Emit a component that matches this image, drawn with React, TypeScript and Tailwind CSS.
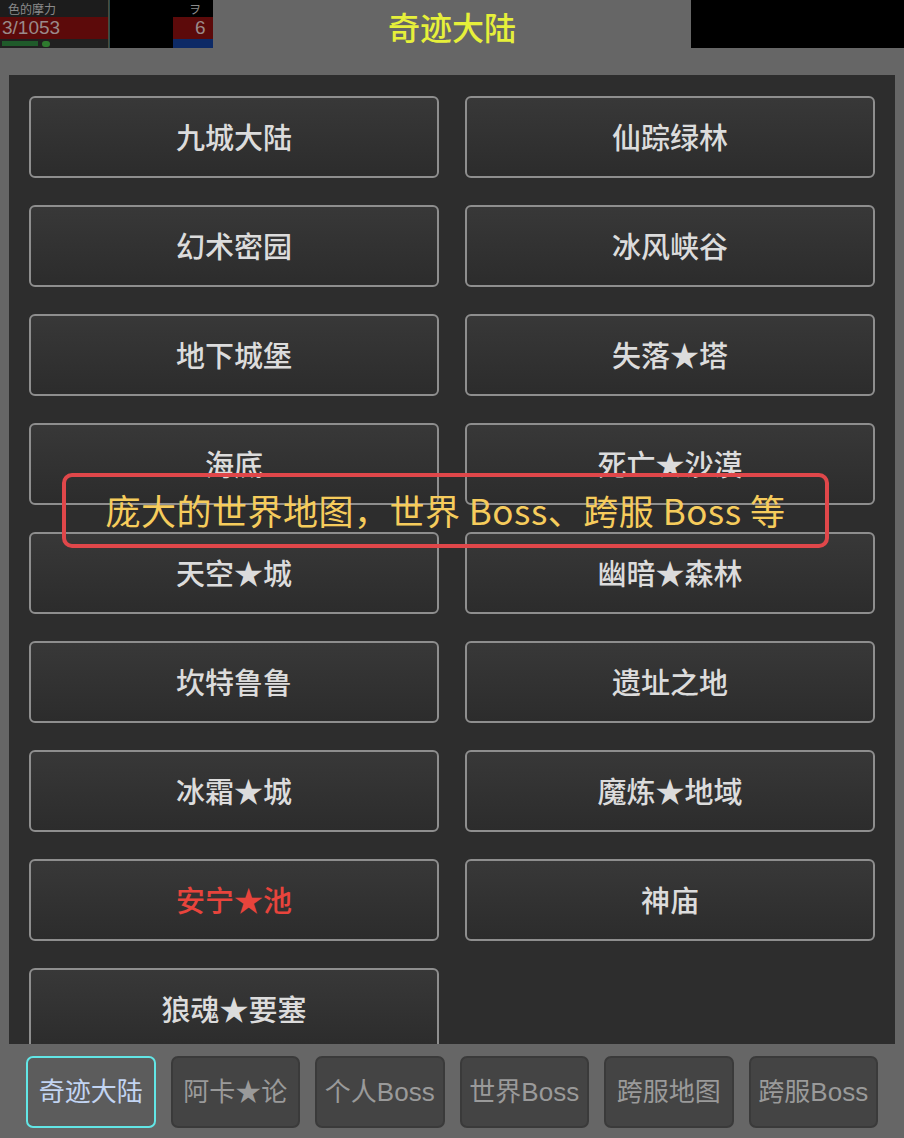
const maps = [
  { name: "九城大陆" },
  { name: "仙踪绿林" },
  { name: "幻术密园" },
  { name: "冰风峡谷" },
  { name: "地下城堡" },
  { name: "失落★塔" },
  { name: "海底" },
  { name: "死亡★沙漠" },
  { name: "天空★城" },
  { name: "幽暗★森林" },
  { name: "坎特鲁鲁" },
  { name: "遗址之地" },
  { name: "冰霜★城" },
  { name: "魔炼★地域" },
  { name: "安宁★池", danger: true },
  { name: "神庙" },
  { name: "狼魂★要塞" },
];

const tabs = ["奇迹大陆", "阿卡★论", "个人Boss", "世界Boss", "跨服地图", "跨服Boss"];

const cjk = "font-['Noto_Sans_CJK_SC',sans-serif]";

// the dimmed game HUD peeking out behind the dialog
const GameStrip = () => (
  <div className="flex w-[213px] h-[48px] bg-black">
    <div className="flex flex-col w-[108px] bg-[#1c1c1c]">
      <div className="h-[17px] flex items-center text-[12px] leading-[14px] text-[#8a8a8a] pl-[8px] whitespace-nowrap">
        色的摩力
      </div>
      <div className="h-[22px] flex items-center bg-[#5c0a0a] text-[19px] leading-[20px] text-[#9a8a8a] font-['Liberation_Sans',sans-serif] pl-[2px] whitespace-nowrap">
        3/1053
      </div>
      <div className="flex-1 flex items-center gap-[4px] pl-[2px] bg-[#202020]">
        <div className="w-[36px] h-[5px] bg-[#1f5a2a]" />
        <div className="w-[8px] h-[6px] rounded-full bg-[#2e7a2e]" />
      </div>
    </div>
    <div className="w-[1px] bg-[#4a4a3a]" />
    <div className="w-[1px] bg-[#2a4a4a]" />
    <div className="flex-1" />
    <div className="flex flex-col w-[40px] bg-black">
      <div className="h-[17px] flex items-center text-[12px] leading-[14px] text-[#8a8a8a] pl-[16px]">ヲ</div>
      <div className="h-[22px] flex items-center bg-[#5c0a0a] text-[19px] leading-[20px] text-[#9a8a8a] font-['Liberation_Sans',sans-serif] pl-[22px] whitespace-nowrap">
        6
      </div>
      <div className="flex-1 bg-[#0d2a66]" />
    </div>
  </div>
);

const MapButton = ({ name, danger }: { name: string; danger?: boolean }) => (
  <div
    className={`h-[82px] shrink-0 flex items-center justify-center rounded-[6px] border-2 border-[#8e8e8e] bg-gradient-to-b from-[#383838] to-[#2c2c2c] text-[29px] font-medium ${
      danger ? "text-[#e8443c]" : "text-[#dcdcdc]"
    }`}
  >
    {name}
  </div>
);

const App = () => {
  return (
    <div className={`relative w-[904px] h-[1138px] bg-[#666666] overflow-hidden ${cjk}`}>
      <div className="flex h-[48px]">
        <GameStrip />
        <div className="w-[478px] flex items-center justify-center bg-[#666666] text-[32px] font-medium text-[#e6f03a] pt-[3px]">
          奇迹大陆
        </div>
        <div className="flex-1 bg-black" />
      </div>

      <div className="pt-[27px] pl-[9px] pr-[9px]">
        <div className="h-[969px] overflow-hidden bg-[#2d2d2d] pt-[21px] px-[20px]">
          <div className="grid grid-cols-2 gap-x-[26px] gap-y-[27px]">
            {maps.map((m) => (
              <MapButton key={m.name} name={m.name} danger={m.danger} />
            ))}
          </div>
        </div>
      </div>

      <div className="flex gap-[15px] pl-[26px] pt-[12px]">
        {tabs.map((t, i) => (
          <div
            key={t}
            className={`w-[129.5px] h-[72px] flex items-center justify-center rounded-[7px] border-2 text-[26px] font-['Liberation_Sans','Noto_Sans_CJK_SC',sans-serif] ${
              i === 0
                ? "border-[#62e6e6] bg-[#5c5c5c] text-[#c2d4f2]"
                : "border-[#3a3a3a] bg-[#444444] text-[#9a9a9a]"
            }`}
          >
            {t}
          </div>
        ))}
      </div>

      <div className="absolute left-[62px] top-[473px] w-[767px] h-[75px] rounded-[10px] border-[4px] border-[#e0474a] flex items-center justify-center text-[35px] tracking-[0.5px] text-[#f6cc5c] whitespace-nowrap">
        庞大的世界地图，世界 Boss、跨服 Boss 等
      </div>
    </div>
  );
};

export default App;
